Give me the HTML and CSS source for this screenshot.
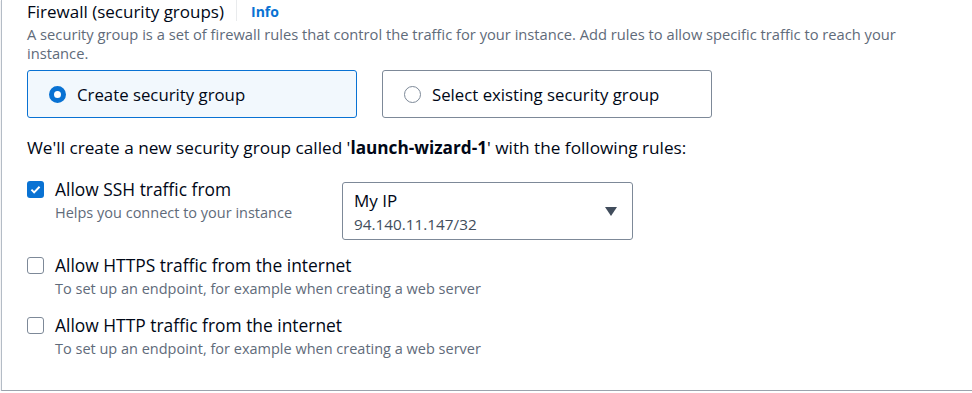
FILE: index.html
```html
<!DOCTYPE html>
<html lang="en">
<head>
  <meta charset="UTF-8">
  <meta name="viewport" content="width=device-width, initial-scale=1.0">
  <link rel="stylesheet" href="styles.css">
</head>
<body>

  <div class="panel">
    <div class="field-head">
      <span class="field-label">Firewall (security groups)</span>
      <span class="divider"></span>
      <a class="info" href="#">Info</a>
    </div>
    <p class="field-desc">A security group is a set of firewall rules that control the traffic for your instance. Add rules to allow specific traffic to reach your instance.</p>

    <div class="tiles">
      <label class="tile selected">
        <span class="radio checked"></span>
        <span class="tile-text">Create security group</span>
      </label>
      <label class="tile">
        <span class="radio"></span>
        <span class="tile-text">Select existing security group</span>
      </label>
    </div>

    <p class="notice">We'll create a new security group called '<b>launch-wizard-1</b>' with the following rules:</p>

    <div class="rules">
      <div class="rule">
        <span class="box checked">
          <svg viewBox="0 0 16 16" width="13" height="13"><path d="M3 8.2l3.3 3.3L13 4.6" fill="none" stroke="#fff" stroke-width="2.4"/></svg>
        </span>
        <div class="rule-text">
          <div class="rule-label">Allow SSH traffic from</div>
          <div class="rule-desc">Helps you connect to your instance</div>
        </div>
        <div class="select">
          <div class="select-value">
            <div class="select-label">My IP</div>
            <div class="select-sub">94.140.11.147/32</div>
          </div>
          <span class="caret"></span>
        </div>
      </div>

      <div class="rule">
        <span class="box"></span>
        <div class="rule-text">
          <div class="rule-label">Allow HTTPS traffic from the internet</div>
          <div class="rule-desc">To set up an endpoint, for example when creating a web server</div>
        </div>
      </div>

      <div class="rule">
        <span class="box"></span>
        <div class="rule-text">
          <div class="rule-label">Allow HTTP traffic from the internet</div>
          <div class="rule-desc">To set up an endpoint, for example when creating a web server</div>
        </div>
      </div>
    </div>
  </div>

</body>
</html>
```

FILE: styles.css
```css
* {
  margin: 0;
  padding: 0;
  box-sizing: border-box;
}

body {
  font-family: 'Open Sans', 'Liberation Sans', sans-serif;
  color: #000716;
  background-color: #fff;
  overflow: hidden;
}

.panel {
  margin-left: 1px;
  height: 391px;
  padding: 0 25px;
  border-left: 1px solid #b4bcc6;
  border-bottom: 1px solid #9ba3ad;
  box-shadow: 0 1px 1px rgba(0, 7, 22, 0.25);
}

.field-head {
  display: flex;
  align-items: center;
  height: 23px;
}

.field-label {
  font-size: 17px;
  line-height: 23px;
}

.divider {
  width: 1px;
  height: 21px;
  margin: 0 14px 2px 12px;
  background-color: #e9ebed;
  align-self: flex-start;
}

.info {
  font-size: 14px;
  font-weight: bold;
  color: #0972d3;
  text-decoration: none;
}

.field-desc {
  margin-top: 2px;
  width: 900px;
  font-size: 14.7px;
  line-height: 19px;
  color: #5f6b7a;
}

.tiles {
  display: flex;
  gap: 25px;
  margin-top: 7px;
}

.tile {
  display: flex;
  align-items: center;
  width: 330px;
  height: 48px;
  padding-left: 21px;
  border: 1px solid #7d8998;
  border-radius: 3px;
}

.tile.selected {
  background-color: #f2f8fd;
  border-color: #0972d3;
}

.radio {
  width: 17px;
  height: 17px;
  border: 1.5px solid #7d8998;
  border-radius: 50%;
  background-color: #fff;
  margin-right: 11px;
}

.radio.checked {
  border: 5px solid #0972d3;
}

.tile-text {
  font-size: 16.8px;
}

.notice {
  margin-top: 19px;
  font-size: 17.2px;
  line-height: 22px;
}

.notice b {
  font-weight: bold;
}

.rules {
  margin-top: 19px;
  display: flex;
  flex-direction: column;
  gap: 14px;
}

.rule {
  display: flex;
  align-items: flex-start;
}

.box {
  display: flex;
  align-items: center;
  justify-content: center;
  flex-shrink: 0;
  width: 17px;
  height: 17px;
  margin-top: 3px;
  margin-right: 11px;
  border: 1.5px solid #7d8998;
  border-radius: 3px;
}

.box.checked {
  border: none;
  background-color: #0972d3;
}

.rule-text {
  width: 287px;
}

.rule-label {
  font-size: 17.4px;
  line-height: 22px;
  white-space: nowrap;
}

.rule-desc {
  margin-top: 2px;
  font-size: 14.5px;
  line-height: 22px;
  color: #5f6b7a;
  white-space: nowrap;
}

.select {
  display: flex;
  align-items: center;
  justify-content: space-between;
  width: 291px;
  height: 58px;
  margin-top: 4px;
  padding: 0 15px 0 11px;
  border: 1px solid #7d8998;
  border-radius: 3px;
}

.select-label {
  font-size: 17px;
  line-height: 22px;
}

.select-sub {
  margin-top: 3px;
  font-size: 15.3px;
  line-height: 18px;
  color: #414d5c;
}

.caret {
  width: 0;
  height: 0;
  border-left: 6px solid transparent;
  border-right: 6px solid transparent;
  border-top: 9px solid #414d5c;
}
```
